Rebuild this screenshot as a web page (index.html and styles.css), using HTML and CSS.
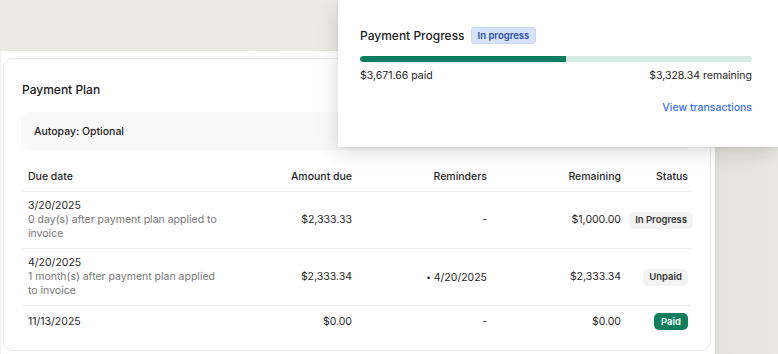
FILE: index.html
```html
<!DOCTYPE html>
<html>
<head>
<meta charset="utf-8">
<link rel="stylesheet" href="styles.css">
</head>
<body>
<div class="page">
  <div class="panel">
    <div class="card">
      <h2 class="card-title">Payment Plan</h2>
      <div class="autopay">Autopay: Optional</div>
      <div class="table">
        <div class="row head">
          <div class="c-date">Due date</div>
          <div class="c-num">Amount due</div>
          <div class="c-num">Reminders</div>
          <div class="c-num">Remaining</div>
          <div class="c-status">Status</div>
        </div>
        <div class="row">
          <div class="c-date"><div>3/20/2025</div><div class="sub">0 day(s) after payment plan applied to invoice</div></div>
          <div class="c-num">$2,333.33</div>
          <div class="c-num">-</div>
          <div class="c-num">$1,000.00</div>
          <div class="c-status"><span class="pill pill-grey pill-wide">In Progress</span></div>
        </div>
        <div class="row">
          <div class="c-date"><div>4/20/2025</div><div class="sub">1 month(s) after payment plan applied to invoice</div></div>
          <div class="c-num">$2,333.34</div>
          <div class="c-num"><span class="dot">•</span> 4/20/2025</div>
          <div class="c-num">$2,333.34</div>
          <div class="c-status"><span class="pill pill-grey">Unpaid</span></div>
        </div>
        <div class="row last">
          <div class="c-date">11/13/2025</div>
          <div class="c-num">$0.00</div>
          <div class="c-num">-</div>
          <div class="c-num">$0.00</div>
          <div class="c-status"><span class="pill pill-green">Paid</span></div>
        </div>
      </div>
    </div>
  </div>
  <div class="popover">
    <div class="pop-head">
      <span class="pop-title">Payment Progress</span>
      <span class="badge">In progress</span>
    </div>
    <div class="bar"><div class="bar-fill" style="width:52.45%"></div></div>
    <div class="bar-labels"><span>$3,671.66 paid</span><span>$3,328.34 remaining</span></div>
    <div class="pop-link"><a href="#">View transactions</a></div>
  </div>
</div>
</body>
</html>
```
FILE: styles.css
```css
* { box-sizing: border-box; }
html, body { margin: 0; padding: 0; }
body {
  width: 778px;
  height: 354px;
  overflow: hidden;
  font-family: Inter, "Noto Sans", sans-serif;
  color: #1a1a1a;
  background: linear-gradient(90deg, #ecebe6 0%, #ebeae5 80%, #e3e2dd 92%, #e9e8e3 100%);
}
.page {
  position: relative;
  height: 354px;
  padding-top: 51px;
}
.panel {
  width: 715px;
  height: 303px;
  background: #fff;
  border-left: 1px solid #f0f0ee;
  padding: 7px 4px 0 2px;
  box-shadow: 2px 0 4px rgba(0,0,0,0.04);
}
.card {
  border: 1px solid #e9e9e9;
  border-radius: 10px;
  height: 293px;
  padding: 22px 19px 0 18px;
}
.card-title {
  margin: 0;
  font-size: 12px;
  line-height: 18px;
  font-weight: 500;
  color: #1c1c1c;
}
.autopay {
  margin-top: 13px;
  margin-left: -1px;
  height: 38px;
  border-radius: 8px;
  background: #f9f9f9;
  padding: 0 13px;
  display: flex;
  align-items: center;
  font-size: 10.5px;
  font-weight: 500;
  color: #1c1c1c;
}
.table {
  margin-top: 13px;
  font-size: 10.5px;
  line-height: 14px;
  color: #1f1f1f;
}
.row {
  display: grid;
  grid-template-columns: 1fr 130px 135px 134px 67px;
  align-items: center;
  padding: 7px 3px 7px 6px;
  border-bottom: 1px solid #ececec;
}
.row.last { border-bottom: none; }
.row.head { font-weight: 500; color: #1f1f1f; }
.c-date { min-width: 0; }
.sub { color: #777; max-width: 190px; }
.c-num { text-align: right; }
.c-status { text-align: right; display: flex; justify-content: flex-end; }
.dot { font-size: 8px; vertical-align: 1px; }
.pill {
  display: inline-flex;
  align-items: center;
  height: 17px;
  padding: 0 6px;
  border-radius: 5px;
  font-size: 9.5px;
  font-weight: 600;
}
.pill-grey { background: #f3f3f3; color: #333; }
.pill-wide { margin-right: -5px; }
.pill-green { background: #0e7d5b; color: #fff; padding: 0 7px; }
.popover {
  position: absolute;
  left: 338px;
  top: 0;
  width: 440px;
  height: 147px;
  background: #fff;
  padding: 26px 26px 0 22px;
  box-shadow: -2px 6px 18px rgba(0,0,0,0.13), 0 1px 3px rgba(0,0,0,0.06);
}
.pop-head {
  display: flex;
  align-items: center;
  gap: 6px;
  height: 18px;
}
.pop-title {
  font-size: 12px;
  font-weight: 500;
  color: #1c1c1c;
}
.badge {
  display: inline-flex;
  align-items: center;
  height: 17px;
  padding: 0 6px;
  border-radius: 3px;
  background: #d5e2fb;
  border: 1px solid #c9d8f7;
  color: #2b4b9b;
  font-size: 9.5px;
  font-weight: 600;
}
.bar {
  margin-top: 12px;
  height: 6px;
  border-radius: 3px;
  background: #d6ebe4;
  overflow: hidden;
}
.bar-fill {
  height: 100%;
  background: #0d7f5f;
  border-radius: 3px 0 0 3px;
}
.bar-labels {
  display: flex;
  justify-content: space-between;
  margin-top: 6px;
  font-size: 10.5px;
  line-height: 15px;
  color: #1f1f1f;
}
.pop-link {
  margin-top: 17px;
  text-align: right;
  font-size: 10.5px;
  line-height: 15px;
}
.pop-link a {
  color: #3d6ff2;
  text-decoration: none;
  font-weight: 500;
}
```
